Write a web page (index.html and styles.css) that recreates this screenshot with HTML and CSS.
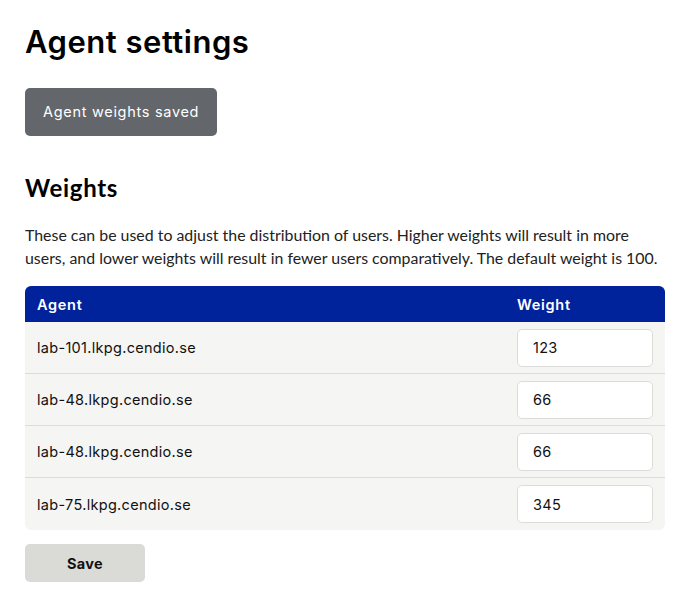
FILE: index.html
```html
<!DOCTYPE html>
<html lang="en">
<head>
<meta charset="utf-8">
<title>Agent settings</title>
<link rel="stylesheet" href="styles.css">
</head>
<body>
<main class="page">
  <h1 class="title">Agent settings</h1>
  <div class="notice">Agent weights saved</div>
  <h2 class="subtitle">Weights</h2>
  <p class="desc">These can be used to adjust the distribution of users. Higher weights will result in more users, and lower weights will result in fewer users comparatively. The default weight is 100.</p>
  <div class="table">
    <div class="row head">
      <div class="cell-agent">Agent</div>
      <div class="cell-weight">Weight</div>
    </div>
    <div class="row">
      <div class="cell-agent">lab-101.lkpg.cendio.se</div>
      <div class="cell-weight"><input class="input" type="text" value="123"></div>
    </div>
    <div class="row">
      <div class="cell-agent">lab-48.lkpg.cendio.se</div>
      <div class="cell-weight"><input class="input" type="text" value="66"></div>
    </div>
    <div class="row">
      <div class="cell-agent">lab-48.lkpg.cendio.se</div>
      <div class="cell-weight"><input class="input" type="text" value="66"></div>
    </div>
    <div class="row last">
      <div class="cell-agent">lab-75.lkpg.cendio.se</div>
      <div class="cell-weight"><input class="input" type="text" value="345"></div>
    </div>
  </div>
  <button class="save" type="button">Save</button>
</main>
</body>
</html>
```

FILE: styles.css
```css
html, body {
  margin: 0;
  padding: 0;
  background: #ffffff;
}
body {
  font-family: Inter, "Open Sans", sans-serif;
  color: #111;
}
.page {
  padding: 22px 29px 20px 25px;
  display: flex;
  flex-direction: column;
  align-items: flex-start;
}
.title {
  margin: 0;
  font-size: 31px;
  line-height: 40px;
  font-weight: 600;
  letter-spacing: 0.5px;
  color: #000;
}
.notice {
  margin-top: 26px;
  background: #63666b;
  color: #fff;
  border-radius: 5px;
  font-size: 14.5px;
  height: 48px;
  line-height: 48px;
  padding: 0 18px;
  font-weight: 400;
  letter-spacing: 0.7px;
}
.subtitle {
  margin: 38px 0 0 0;
  font-family: Lato, sans-serif;
  font-size: 24px;
  line-height: 28px;
  font-weight: 700;
  letter-spacing: 0.7px;
  color: #000;
}
.desc {
  margin: 21px 0 0 0;
  font-family: Lato, sans-serif;
  font-size: 15.9px;
  line-height: 23px;
  color: #222;
  max-width: 640px;
}
.table {
  margin-top: 17px;
  width: 640px;
  border-radius: 6px;
  overflow: hidden;
  background: #f5f5f3;
}
.row {
  display: flex;
  align-items: center;
  height: 51px;
  border-bottom: 1px solid #dcdcd9;
  font-size: 14.5px;
  letter-spacing: 0.3px;
  color: #111;
}
.row.last {
  height: 52px;
  border-bottom: none;
}
.row.head {
  height: 36px;
  background: #00239c;
  color: #fff;
  font-weight: 600;
  letter-spacing: 0.7px;
  border-bottom: none;
}
.cell-agent {
  flex: 1;
  padding-left: 12px;
}
.cell-weight {
  width: 148px;
}
.input {
  box-sizing: border-box;
  width: 136px;
  height: 38px;
  border: 1px solid #dcdcd9;
  border-radius: 5px;
  background: #fff;
  padding: 0 15px;
  font-family: Inter, sans-serif;
  font-size: 14.5px;
  letter-spacing: 0.3px;
  color: #111;
  outline: none;
}
.save {
  margin-top: 14px;
  width: 120px;
  height: 38px;
  border: none;
  border-radius: 5px;
  background: #dadad6;
  font-family: Inter, sans-serif;
  font-size: 14.5px;
  font-weight: 700;
  letter-spacing: 0.3px;
  color: #111;
}
```
